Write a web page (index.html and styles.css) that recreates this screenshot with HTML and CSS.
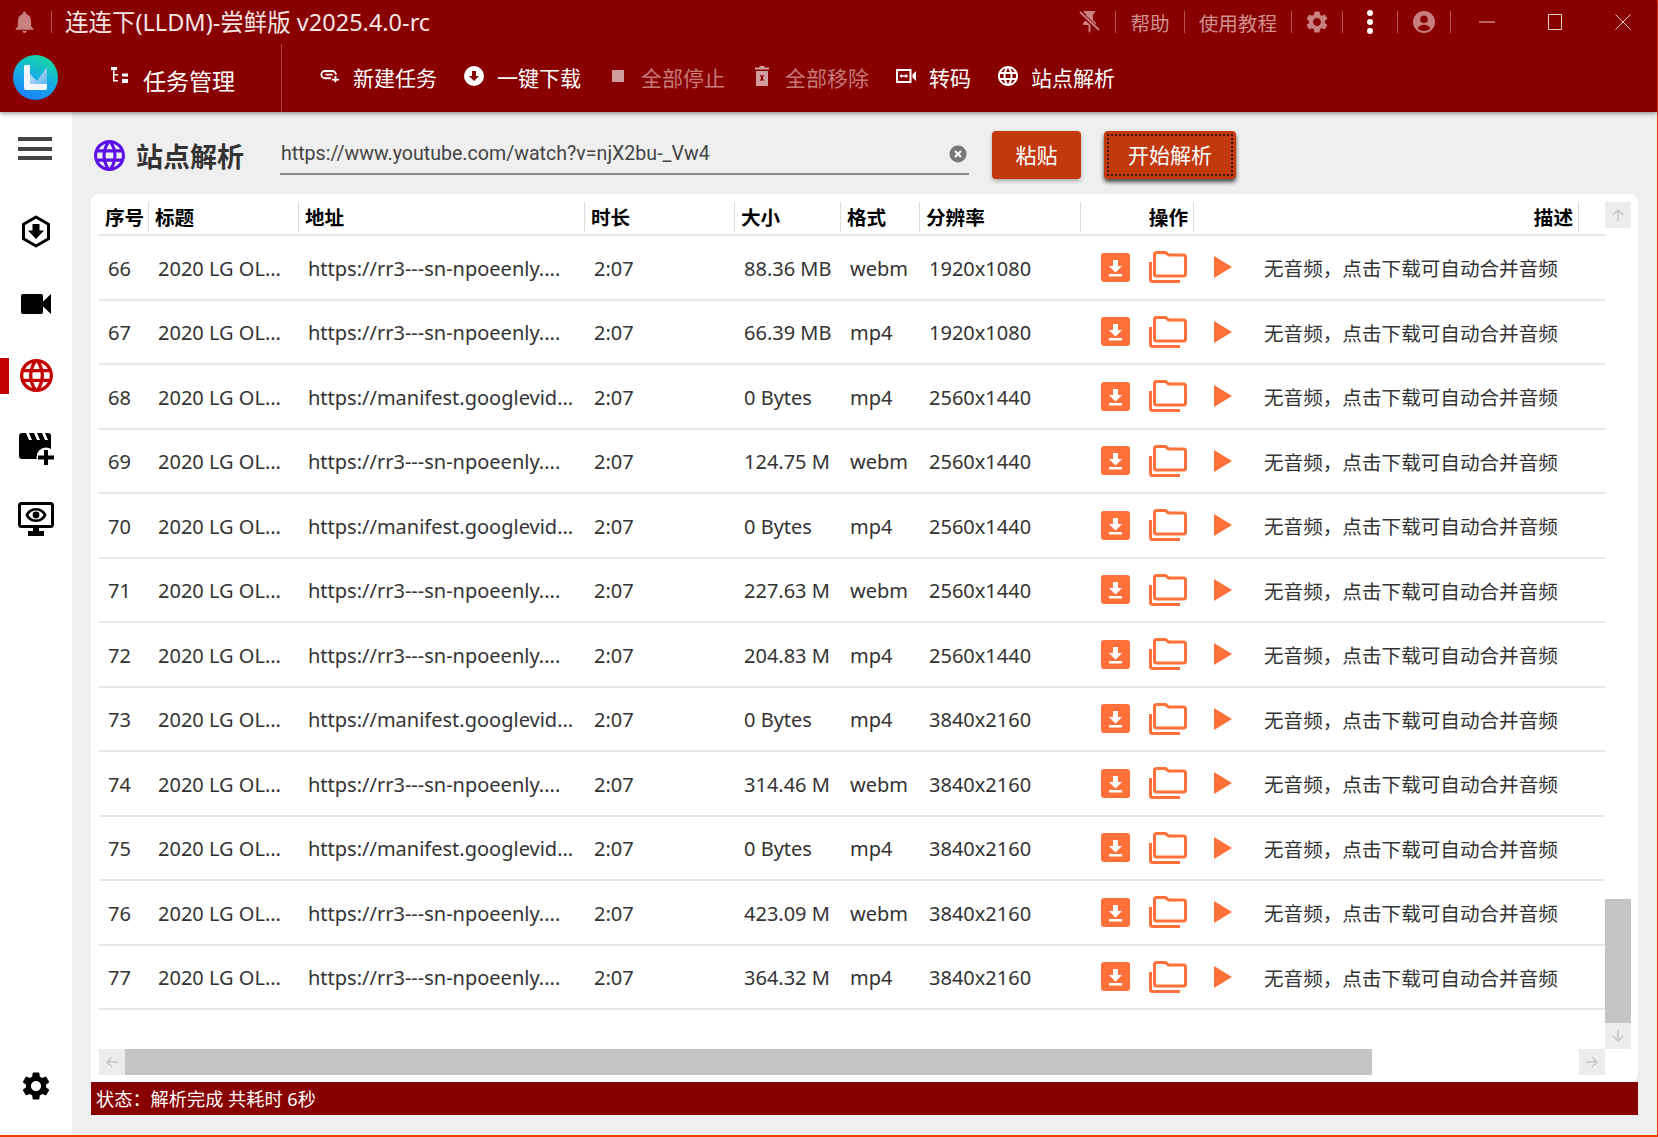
FILE: index.html
```html
<!DOCTYPE html>
<html lang="zh-CN">
<head>
    <meta charset="UTF-8">
    <meta name="viewport" content="width=device-width, initial-scale=1.0">
    <title>连连下(LLDM)-尝鲜版</title>
    <link rel="stylesheet" href="styles.css">
</head>
<body>
    <svg class="defs" width="0" height="0">
        <symbol id="i-gear" viewBox="2 2 20 20"><path d="M19.14 12.94c.04-.3.06-.61.06-.94 0-.32-.02-.64-.07-.94l2.03-1.58a.49.49 0 0 0 .12-.61l-1.92-3.32a.488.488 0 0 0-.59-.22l-2.39.96c-.5-.38-1.03-.7-1.62-.94l-.36-2.54a.484.484 0 0 0-.48-.41h-3.84c-.24 0-.43.17-.47.41l-.36 2.54c-.59.24-1.13.57-1.62.94l-2.39-.96c-.22-.08-.47 0-.59.22L2.74 8.87c-.12.21-.08.47.12.61l2.03 1.58c-.05.3-.09.63-.09.94s.02.64.07.94l-2.03 1.58a.49.49 0 0 0-.12.61l1.92 3.32c.12.22.37.29.59.22l2.39-.96c.5.38 1.03.7 1.62.94l.36 2.54c.05.24.24.41.48.41h3.84c.24 0 .44-.17.47-.41l.36-2.54c.59-.24 1.13-.56 1.62-.94l2.39.96c.22.08.47 0 .59-.22l1.92-3.32c.12-.22.07-.47-.12-.61l-2.01-1.58zM12 15.6c-1.98 0-3.6-1.62-3.6-3.6s1.62-3.6 3.6-3.6 3.6 1.62 3.6 3.6-1.62 3.6-3.6 3.6z"/></symbol>
        <symbol id="i-globe" viewBox="2 2 20 20"><path d="M11.99 2C6.47 2 2 6.48 2 12s4.47 10 9.99 10C17.52 22 22 17.52 22 12S17.52 2 11.99 2zm6.93 6h-2.95c-.32-1.25-.78-2.45-1.38-3.56 1.84.63 3.37 1.91 4.33 3.56zM12 4.04c.83 1.2 1.48 2.53 1.91 3.96h-3.82c.43-1.43 1.08-2.76 1.91-3.96zM4.26 14C4.1 13.36 4 12.69 4 12s.1-1.36.26-2h3.38c-.08.66-.14 1.32-.14 2 0 .68.06 1.34.14 2H4.26zm.82 2h2.95c.32 1.25.78 2.45 1.38 3.56-1.84-.63-3.37-1.9-4.33-3.56zm2.95-8H5.08c.96-1.66 2.49-2.93 4.33-3.56C8.81 5.55 8.35 6.75 8.03 8zM12 19.96c-.83-1.2-1.48-2.53-1.91-3.96h3.82c-.43 1.43-1.08 2.76-1.91 3.96zM14.34 14H9.66c-.09-.66-.16-1.32-.16-2 0-.68.07-1.35.16-2h4.68c.09.65.16 1.32.16 2 0 .68-.07 1.34-.16 2zm.25 5.56c.6-1.11 1.06-2.31 1.38-3.56h2.95c-.96 1.65-2.49 2.93-4.33 3.56zM16.36 14c.08-.66.14-1.32.14-2 0-.68-.06-1.34-.14-2h3.38c.16.64.26 1.31.26 2s-.1 1.36-.26 2h-3.38z"/></symbol>
        <symbol id="i-save" viewBox="0 0 29 29"><rect width="29" height="29" rx="3" fill="#ff7139"/><path d="M12 7h5v6h4l-6.500 6.500L8 13h4zM8 21h13v2.500H8z" fill="#fff"/></symbol>
        <symbol id="i-folder" viewBox="0 0 38 32"><path d="M7.500 1.500h9l3 2.500h15a2 2 0 0 1 2 2v17a2 2 0 0 1-2 2h-27a2 2 0 0 1-2-2V3.500a2 2 0 0 1 2-2z" fill="none" stroke="#ff7139" stroke-width="3"/><path d="M1.500 11v17.500a2 2 0 0 0 2 2H31" fill="none" stroke="#ff7139" stroke-width="3"/></symbol>
        <symbol id="i-play" viewBox="0 0 18 22"><path d="M0 0l18 11L0 22z" fill="#ff7139"/></symbol>
    </svg>

    <div class="app">
        <header class="topbar">
            <div class="titlebar">
                <svg class="ico-bell" viewBox="4 2 16 20"><path d="M12 22c1.100 0 2-.9 2-2h-4c0 1.100.9 2 2 2zm6-6v-5c0-3.070-1.630-5.640-4.500-6.320V4c0-.83-.67-1.500-1.500-1.500s-1.500.67-1.500 1.500v.68C7.640 5.360 6 7.920 6 11v5l-2 2v1h16v-1l-2-2z"/></svg>
                <span class="sep"></span>
                <span class="app-title">连连下(LLDM)-尝鲜版 v2025.4.0-rc</span>
                <div class="tools">
                    <svg class="ico-pin" viewBox="0 0 22 24"><path d="M5 1h11v2l-2 1v6l3 3v2H4v-2l3-3V4L5 3zM9.500 15h2v6l-1 2-1-2z"/><path d="M1 2.500l19 18" stroke="#880000" stroke-width="4"/><path d="M1 2l19 18" stroke="#c98080" stroke-width="1.800"/></svg>
                    <span class="sep"></span>
                    <span class="tool-link">帮助</span>
                    <span class="sep"></span>
                    <span class="tool-link">使用教程</span>
                    <span class="sep"></span>
                    <svg class="ico-tool"><use href="#i-gear"/></svg>
                    <span class="sep"></span>
                    <span class="dots"><i></i><i></i><i></i></span>
                    <span class="sep"></span>
                    <svg class="ico-user" viewBox="0 0 24 24"><path fill-rule="evenodd" d="M12 1a11 11 0 1 0 0 22 11 11 0 0 0 0-22zm0 4.500a3.800 3.800 0 1 1 0 7.600 3.800 3.800 0 0 1 0-7.600zM5.500 18.500c1-2.500 3.500-3.800 6.500-3.800s5.500 1.300 6.500 3.800A8.800 8.800 0 0 1 12 21a8.800 8.800 0 0 1-6.500-2.500z"/></svg>
                    <span class="sep"></span>
                </div>
                <div class="winbtns">
                    <span class="winbtn"><svg width="16" height="16"><path d="M0 8h16" stroke="#e7cccc"/></svg></span>
                    <span class="winbtn"><svg width="16" height="16"><path d="M1.500 .5h13v15h-13z" fill="none" stroke="#e7cccc"/></svg></span>
                    <span class="winbtn"><svg width="16" height="16"><path d="M.5 .5l15 15M15.500 .5l-15 15" stroke="#e7cccc"/></svg></span>
                </div>
            </div>
            <div class="toolbar">
                <svg class="logo" viewBox="0 0 45 45">
                    <defs>
                        <linearGradient id="logo-grad" x1="0.700" y1="0" x2="0.300" y2="1"><stop offset="0" stop-color="#14dba0"/><stop offset="0.550" stop-color="#17a8ea"/><stop offset="1" stop-color="#1a7ef8"/></linearGradient>
                        <linearGradient id="logo-tick" x1="0" y1="0" x2="1" y2="1"><stop offset="0" stop-color="#d8eaf8"/><stop offset="1" stop-color="#5fb2ee"/></linearGradient>
                    </defs>
                    <circle cx="22.500" cy="22.500" r="22.500" fill="url(#logo-grad)"/>
                    <path d="M17 19l7 7 10-14v17H17z" fill="url(#logo-tick)"/>
                    <path d="M11 11a1 1 0 0 1 1-1h5v19h17v4a2 2 0 0 1-2 2H13a2 2 0 0 1-2-2z" fill="#f2f6fa"/>
                </svg>
                <div class="task-tab">
                    <svg class="ico-task" viewBox="0 0 18 18"><path d="M0 0h6v3H0zM2 3h1.500v4H7v1.500H3.500v4.500H7v1.500H2zM11 6.500h6v3h-6zM11 12h6v4h-6z"/></svg>
                    <span>任务管理</span>
                </div>
                <span class="tab-divider"></span>
                <nav class="actions">
                    <a class="action">
                        <svg viewBox="0 -4 22 22"><path d="M12 9.500H5.500a4 4 0 0 1 0-8h8a4 4 0 0 1 4 4M6 5.500h8" fill="none" stroke="#fff" stroke-width="2"/><path d="M16 7h2v3h3v2h-3v2h-2v-2h-3v-2h3z" fill="#fff"/></svg>
                        <span>新建任务</span>
                    </a>
                    <a class="action">
                        <svg viewBox="0 0 20 20"><path fill-rule="evenodd" d="M10 0a10 10 0 1 0 0 20 10 10 0 0 0 0-20zM8 5h4v5h3l-5 5-5-5h3z" fill="#fff"/></svg>
                        <span>一键下载</span>
                    </a>
                    <a class="action is-off">
                        <svg viewBox="0 0 20 20"><path d="M4 4h12v12H4z" fill="#d49d9d"/></svg>
                        <span>全部停止</span>
                    </a>
                    <a class="action is-off">
                        <svg viewBox="0 0 20 20"><path fill-rule="evenodd" d="M7.500 0h5v1.500H17v2H3v-2h4.500zM4 5h12v15H4zM8 9.500l1.200 2.500L8 14.500l1 .7 1-1.700 1 1.700 1-.7-1.200-2.500L12 9.500l-1-.7-1 1.700-1-1.700z" fill="#d49d9d"/></svg>
                        <span>全部移除</span>
                    </a>
                    <a class="action">
                        <svg viewBox="0 -3 20 20"><path fill-rule="evenodd" d="M0 0h15.500v14H0zm2 2v10h11.500V2zM16.500 5.500L20 2v10l-3.500-3.500zM3.500 7l2.300-2.300v1.500h3.900V4.700L12 7l-2.300 2.300V7.800H5.800v1.500z" fill="#fff"/></svg>
                        <span>转码</span>
                    </a>
                    <a class="action">
                        <svg fill="#fff"><use href="#i-globe"/></svg>
                        <span>站点解析</span>
                    </a>
                </nav>
            </div>
        </header>

        <div class="main">
            <aside class="sidebar">
                <button class="menu-btn"><span></span><span></span><span></span></button>
                <a class="nav-item">
                    <svg width="30" height="33" viewBox="0 0 30 33"><path d="M15 2l12.500 7.200v14.600L15 31 2.500 23.800V9.200z" fill="none" stroke="#000" stroke-width="3" stroke-linejoin="round"/><path d="M11.500 9h7v6.500H23L15 24l-8-8.500h4.500z"/></svg>
                </a>
                <a class="nav-item">
                    <svg width="30" height="20" viewBox="0 0 30 20"><path d="M2 0h18a2 2 0 0 1 2 2v5.500L30 0v20l-8-7.500V18a2 2 0 0 1-2 2H2a2 2 0 0 1-2-2V2a2 2 0 0 1 2-2z"/></svg>
                </a>
                <a class="nav-item is-active">
                    <svg width="33" height="33" fill="#c40000"><use href="#i-globe"/></svg>
                </a>
                <a class="nav-item nav-clapper">
                    <svg width="35" height="32" viewBox="0 0 35 32"><rect width="32" height="26" rx="3"/><path d="M7 0h3l3 7h-3zM15 0h3l3 7h-3zM23 0h3l3 7h-3z" fill="#fff"/><circle cx="27" cy="24" r="9.500" fill="#fff"/><path d="M25 17h4v5.500h6v4h-6V32h-4v-5.500h-6v-4h6z"/></svg>
                </a>
                <a class="nav-item">
                    <svg width="36" height="34" viewBox="0 0 36 34"><rect x="1.500" y="1.500" width="33" height="23" rx="2" fill="none" stroke="#000" stroke-width="3"/><path d="M10 29h16v5H10zM15 25h6v5h-6z"/><path fill-rule="evenodd" d="M18 6c5.200 0 9 3 10.500 7-1.500 4-5.300 7-10.500 7s-9-3-10.500-7C9 9 12.800 6 18 6zm0 2.500c-3.400 0-6 1.900-7.600 4.500 1.600 2.600 4.200 4.500 7.600 4.500s6-1.900 7.600-4.500c-1.600-2.600-4.200-4.500-7.600-4.500z"/><circle cx="18" cy="13" r="3.400"/></svg>
                </a>
                <a class="nav-item nav-bottom">
                    <svg width="28" height="28"><use href="#i-gear"/></svg>
                </a>
            </aside>

            <section class="content">
                <div class="parse-bar">
                    <svg class="parse-globe" fill="#5b10e8"><use href="#i-globe"/></svg>
                    <h1 class="parse-title">站点解析</h1>
                    <div class="url-field">
                        <span class="url-text">https://www.youtube.com/watch?v=njX2bu-_Vw4</span>
                        <svg class="url-clear" viewBox="0 0 18 18"><circle cx="9" cy="9" r="8.500" fill="#777"/><path d="M6 6l6 6M12 6l-6 6" stroke="#fff" stroke-width="2"/></svg>
                    </div>
                    <button class="btn">粘贴</button>
                    <button class="btn btn-focus">开始解析</button>
                </div>

                <div class="card">
                    <div class="grid">
                        <div class="grid-head">
                            <div>序号</div><div>标题</div><div>地址</div><div>时长</div><div>大小</div><div>格式</div><div>分辨率</div><div class="right">操作</div><div class="right">描述</div>
                        </div>
                        <div class="grid-row"><div>66</div><div>2020 LG OL...</div><div>https://rr3---sn-npoeenly....</div><div>2:07</div><div>88.36 MB</div><div>webm</div><div>1920x1080</div><div class="ops"><svg class="op-save"><use href="#i-save"/></svg><svg class="op-folder"><use href="#i-folder"/></svg><svg class="op-play"><use href="#i-play"/></svg></div><div class="desc">无音频，点击下载可自动合并音频</div></div>
                        <div class="grid-row"><div>67</div><div>2020 LG OL...</div><div>https://rr3---sn-npoeenly....</div><div>2:07</div><div>66.39 MB</div><div>mp4</div><div>1920x1080</div><div class="ops"><svg class="op-save"><use href="#i-save"/></svg><svg class="op-folder"><use href="#i-folder"/></svg><svg class="op-play"><use href="#i-play"/></svg></div><div class="desc">无音频，点击下载可自动合并音频</div></div>
                        <div class="grid-row"><div>68</div><div>2020 LG OL...</div><div>https://manifest.googlevid...</div><div>2:07</div><div>0 Bytes</div><div>mp4</div><div>2560x1440</div><div class="ops"><svg class="op-save"><use href="#i-save"/></svg><svg class="op-folder"><use href="#i-folder"/></svg><svg class="op-play"><use href="#i-play"/></svg></div><div class="desc">无音频，点击下载可自动合并音频</div></div>
                        <div class="grid-row"><div>69</div><div>2020 LG OL...</div><div>https://rr3---sn-npoeenly....</div><div>2:07</div><div>124.75 M</div><div>webm</div><div>2560x1440</div><div class="ops"><svg class="op-save"><use href="#i-save"/></svg><svg class="op-folder"><use href="#i-folder"/></svg><svg class="op-play"><use href="#i-play"/></svg></div><div class="desc">无音频，点击下载可自动合并音频</div></div>
                        <div class="grid-row"><div>70</div><div>2020 LG OL...</div><div>https://manifest.googlevid...</div><div>2:07</div><div>0 Bytes</div><div>mp4</div><div>2560x1440</div><div class="ops"><svg class="op-save"><use href="#i-save"/></svg><svg class="op-folder"><use href="#i-folder"/></svg><svg class="op-play"><use href="#i-play"/></svg></div><div class="desc">无音频，点击下载可自动合并音频</div></div>
                        <div class="grid-row"><div>71</div><div>2020 LG OL...</div><div>https://rr3---sn-npoeenly....</div><div>2:07</div><div>227.63 M</div><div>webm</div><div>2560x1440</div><div class="ops"><svg class="op-save"><use href="#i-save"/></svg><svg class="op-folder"><use href="#i-folder"/></svg><svg class="op-play"><use href="#i-play"/></svg></div><div class="desc">无音频，点击下载可自动合并音频</div></div>
                        <div class="grid-row"><div>72</div><div>2020 LG OL...</div><div>https://rr3---sn-npoeenly....</div><div>2:07</div><div>204.83 M</div><div>mp4</div><div>2560x1440</div><div class="ops"><svg class="op-save"><use href="#i-save"/></svg><svg class="op-folder"><use href="#i-folder"/></svg><svg class="op-play"><use href="#i-play"/></svg></div><div class="desc">无音频，点击下载可自动合并音频</div></div>
                        <div class="grid-row"><div>73</div><div>2020 LG OL...</div><div>https://manifest.googlevid...</div><div>2:07</div><div>0 Bytes</div><div>mp4</div><div>3840x2160</div><div class="ops"><svg class="op-save"><use href="#i-save"/></svg><svg class="op-folder"><use href="#i-folder"/></svg><svg class="op-play"><use href="#i-play"/></svg></div><div class="desc">无音频，点击下载可自动合并音频</div></div>
                        <div class="grid-row"><div>74</div><div>2020 LG OL...</div><div>https://rr3---sn-npoeenly....</div><div>2:07</div><div>314.46 M</div><div>webm</div><div>3840x2160</div><div class="ops"><svg class="op-save"><use href="#i-save"/></svg><svg class="op-folder"><use href="#i-folder"/></svg><svg class="op-play"><use href="#i-play"/></svg></div><div class="desc">无音频，点击下载可自动合并音频</div></div>
                        <div class="grid-row"><div>75</div><div>2020 LG OL...</div><div>https://manifest.googlevid...</div><div>2:07</div><div>0 Bytes</div><div>mp4</div><div>3840x2160</div><div class="ops"><svg class="op-save"><use href="#i-save"/></svg><svg class="op-folder"><use href="#i-folder"/></svg><svg class="op-play"><use href="#i-play"/></svg></div><div class="desc">无音频，点击下载可自动合并音频</div></div>
                        <div class="grid-row"><div>76</div><div>2020 LG OL...</div><div>https://rr3---sn-npoeenly....</div><div>2:07</div><div>423.09 M</div><div>webm</div><div>3840x2160</div><div class="ops"><svg class="op-save"><use href="#i-save"/></svg><svg class="op-folder"><use href="#i-folder"/></svg><svg class="op-play"><use href="#i-play"/></svg></div><div class="desc">无音频，点击下载可自动合并音频</div></div>
                        <div class="grid-row"><div>77</div><div>2020 LG OL...</div><div>https://rr3---sn-npoeenly....</div><div>2:07</div><div>364.32 M</div><div>mp4</div><div>3840x2160</div><div class="ops"><svg class="op-save"><use href="#i-save"/></svg><svg class="op-folder"><use href="#i-folder"/></svg><svg class="op-play"><use href="#i-play"/></svg></div><div class="desc">无音频，点击下载可自动合并音频</div></div>
                    </div>
                    <div class="vscroll">
                        <span class="sb-btn"><svg width="14" height="14"><path d="M7 13V2M2 7l5-5 5 5" fill="none" stroke="#c8c8c8" stroke-width="1.500"/></svg></span>
                        <span class="vthumb"></span>
                        <span class="sb-btn"><svg width="14" height="14"><path d="M7 1v11M2 7l5 5 5-5" fill="none" stroke="#c8c8c8" stroke-width="1.500"/></svg></span>
                    </div>
                    <div class="hscroll">
                        <span class="sb-btn"><svg width="14" height="14"><path d="M13 7H2M7 2L2 7l5 5" fill="none" stroke="#c8c8c8" stroke-width="1.500"/></svg></span>
                        <span class="hthumb"></span>
                        <span class="sb-btn"><svg width="14" height="14"><path d="M1 7h11M7 2l5 5-5 5" fill="none" stroke="#c8c8c8" stroke-width="1.500"/></svg></span>
                    </div>
                </div>
                <div class="statusbar">状态：解析完成 共耗时 6秒</div>
            </section>
        </div>
    </div>
</body>
</html>
```

FILE: styles.css
```css
* {
    box-sizing: border-box;
}

body {
    margin: 0;
    font-family: "Noto Sans", "Noto Sans CJK SC", sans-serif;
    background-color: #efefef;
    color: #333;
}

.defs {
    display: block;
    height: 0;
}

.app {
    display: flex;
    flex-direction: column;
    height: 1137px;
    border-right: 1px solid #f03c00;
    border-bottom: 2px solid #f03c00;
}

/* top red area */
.topbar {
    background-color: #880000;
    color: #fff;
    box-shadow: 0 2px 4px rgba(0, 0, 0, 0.35);
    position: relative;
}

.titlebar {
    display: flex;
    align-items: center;
    height: 44px;
    padding-left: 15px;
}

.ico-bell {
    width: 19px;
    height: 22px;
    fill: #c98080;
}

.sep {
    width: 1px;
    height: 22px;
    background-color: #b35555;
}

.titlebar > .sep {
    margin-left: 17px;
}

.app-title {
    margin-left: 13px;
    font-size: 23.500px;
    line-height: 44px;
    color: #f5e5e5;
}

.tools {
    display: flex;
    align-items: center;
    gap: 14px;
    margin-left: auto;
}

.tool-link {
    font-size: 19.600px;
    color: #cf9090;
}

.ico-pin {
    width: 22px;
    height: 24px;
    fill: #c98080;
}

.ico-tool {
    width: 22px;
    height: 22px;
    fill: #c98080;
}

.ico-user {
    width: 24px;
    height: 24px;
    fill: #c98080;
}

.dots {
    display: flex;
    flex-direction: column;
    align-items: center;
    justify-content: space-between;
    width: 26px;
    height: 24px;
}

.dots i {
    width: 6px;
    height: 6px;
    border-radius: 50%;
    background-color: #fff;
}

.winbtns {
    display: flex;
    margin-left: 2px;
}

.winbtn {
    display: flex;
    align-items: center;
    justify-content: center;
    width: 68px;
    height: 44px;
}

.toolbar {
    display: flex;
    align-items: stretch;
    height: 68px;
    padding-left: 13px;
}

.logo {
    width: 45px;
    height: 45px;
    margin-top: 11px;
}

.task-tab {
    display: flex;
    align-items: center;
    gap: 14px;
    margin-left: 53px;
    padding-top: 4px;
    font-size: 23px;
}

.ico-task {
    width: 18px;
    height: 18px;
    fill: #fff;
    margin-top: -8px;
}

.tab-divider {
    width: 1px;
    margin-left: 46px;
    background-color: #a84444;
}

.actions {
    display: flex;
    align-items: center;
    gap: 27px;
    margin-left: 38px;
}

.action {
    display: flex;
    align-items: center;
    gap: 13px;
    padding-bottom: 2px;
    font-size: 21px;
    color: #fff;
}

.action svg {
    width: 20px;
    height: 20px;
    margin-top: -3px;
}

.action.is-off {
    color: #c67a7a;
}

/* body */
.main {
    display: flex;
    flex: 1;
    min-height: 0;
}

.sidebar {
    display: flex;
    flex-direction: column;
    width: 72px;
    background-color: #fff;
}

.menu-btn {
    display: flex;
    flex-direction: column;
    justify-content: space-between;
    width: 34px;
    height: 23px;
    margin: 25px 0 36px 18px;
    padding: 0;
    border: none;
    background: none;
}

.menu-btn span {
    height: 4px;
    background-color: #444;
}

.nav-item {
    display: flex;
    align-items: center;
    justify-content: center;
    height: 71.800px;
    position: relative;
}

.nav-clapper {
    padding-top: 4px;
}

.nav-item.is-active::before {
    content: "";
    position: absolute;
    left: 0;
    top: 18px;
    width: 9px;
    height: 36px;
    background-color: #c40000;
}

.nav-bottom {
    margin-top: auto;
    margin-bottom: 13px;
}

.content {
    flex: 1;
    min-width: 0;
    padding-left: 19px;
}

.parse-bar {
    display: flex;
    align-items: flex-start;
    height: 82px;
    padding-top: 19px;
}

.parse-globe {
    width: 31px;
    height: 31px;
    margin: 9px 0 0 3px;
}

.parse-title {
    margin: 2px 0 0 11px;
    font-size: 27px;
    line-height: 48px;
    font-weight: 700;
    color: #333;
}

.url-field {
    display: flex;
    align-items: center;
    justify-content: space-between;
    width: 689px;
    height: 44px;
    margin-left: 36px;
    padding: 3px 2px 0 1px;
    border-bottom: 2px solid #888;
}

.url-text {
    font-family: Roboto, "Noto Sans CJK SC", sans-serif;
    font-size: 19.600px;
    color: #444;
}

.url-clear {
    width: 18px;
    height: 18px;
}

.btn {
    height: 48px;
    margin-left: 23px;
    padding: 0 0 2px;
    width: 89px;
    border: none;
    border-radius: 4px;
    background-color: #c2390e;
    box-shadow: 0 2px 4px rgba(0, 0, 0, 0.3);
    color: #fff;
    font-family: inherit;
    font-size: 21px;
}

.btn-focus {
    width: 132px;
    outline: 2px dotted #3a1206;
    outline-offset: -5px;
    box-shadow: 0 3px 4px rgba(0, 0, 0, 0.7);
}

/* table card */
.card {
    display: grid;
    grid-template-columns: 1506px 26px;
    grid-template-rows: 847px 26px;
    width: 1547px;
    height: 888px;
    padding: 8px 7px 7px 8px;
    border-radius: 8px 8px 8px 0;
    background-color: #fff;
}

.grid {
    overflow: hidden;
}

.grid-head {
    display: grid;
    grid-template-columns: 50px 150px 286px 150px 106px 79px 161px 113px 385px;
    height: 34px;
    padding-bottom: 4px;
    border-bottom: 2px solid #e8e8e8;
    font-size: 19.600px;
    font-weight: 700;
    color: #000;
    line-height: 32px;
}

.grid-head > div {
    height: 30px;
    padding-left: 6px;
    border-right: 1px solid #ddd;
    white-space: nowrap;
}

.grid-head > .right {
    padding-right: 5px;
    text-align: right;
}

.grid-row {
    display: grid;
    grid-template-columns: 50px 150px 286px 150px 106px 79px 161px 174px 1fr;
    align-items: center;
    height: 64.500px;
    border-bottom: 2px solid #e8e8e8;
    font-size: 20px;
    color: #333;
}

.grid-row > div {
    padding: 2px 0 0 9px;
    white-space: nowrap;
}

.grid-row > .ops {
    display: flex;
    align-items: center;
    padding: 0 0 0 20px;
}

.grid-row > .desc {
    padding-top: 1px;
    font-size: 19.600px;
}

.op-save {
    width: 29px;
    height: 29px;
}

.op-folder {
    width: 38px;
    height: 32px;
    margin-left: 19px;
}

.op-play {
    width: 18px;
    height: 22px;
    margin-left: 27px;
}

.vscroll {
    display: flex;
    flex-direction: column;
}

.hscroll {
    display: flex;
}

.sb-btn {
    display: flex;
    align-items: center;
    justify-content: center;
    flex: none;
    width: 26px;
    height: 26px;
    background-color: #ececec;
}

.vthumb {
    width: 26px;
    height: 124px;
    margin-top: auto;
    background-color: #c4c4c4;
}

.hthumb {
    width: 1247px;
    height: 26px;
    margin: 0 auto 0 0;
    background-color: #c4c4c4;
}

.statusbar {
    width: 1547px;
    height: 33px;
    padding-left: 5px;
    background-color: #880000;
    color: #fff;
    font-size: 18.200px;
    line-height: 35px;
}
```
